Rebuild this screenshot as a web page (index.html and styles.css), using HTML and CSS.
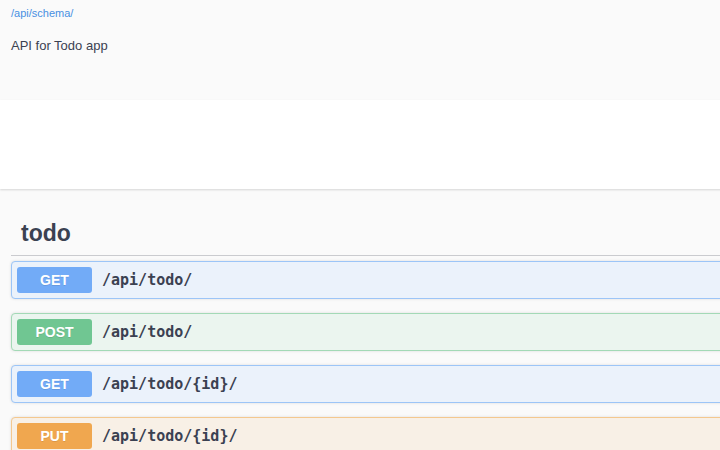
FILE: index.html
```html
<!DOCTYPE html>
<html>
<head>
    <link rel="stylesheet" href="styles.css">
</head>
<body>
    <div class="info">
        <a class="schema-link" href="#">/api/schema/</a>
        <p class="description">API for Todo app</p>
    </div>
    <div class="schemes"></div>
    <div class="wrapper">
        <h3 class="tag">todo</h3>
        <div class="opblock get">
            <span class="method">GET</span>
            <span class="path">/api/todo/</span>
        </div>
        <div class="opblock post">
            <span class="method">POST</span>
            <span class="path">/api/todo/</span>
        </div>
        <div class="opblock get">
            <span class="method">GET</span>
            <span class="path">/api/todo/{id}/</span>
        </div>
        <div class="opblock put">
            <span class="method">PUT</span>
            <span class="path">/api/todo/{id}/</span>
        </div>
    </div>
</body>
</html>
```

FILE: styles.css
```css
:root {
    --text-color: #3b4151;
    --get-color: #72abf7;
    --post-color: #70c692;
    --put-color: #f0a74f;
}
html, body {
    overflow: hidden;
}
body {
    margin: 0;
    width: 760px;
    background: #fafafa;
    font-family: "Liberation Sans", Arial, sans-serif;
    color: var(--text-color);
}
.info {
    height: 100px;
    box-sizing: border-box;
    padding: 3px 11px 0;
    background: #fafafa;
}
.schema-link {
    font-size: 11px;
    color: #4990e2;
    text-decoration: none;
}
.description {
    margin: 17px 0 0;
    font-size: 13px;
}
.schemes {
    height: 89px;
    background: #fff;
    box-shadow: 0 1px 2px 0 rgba(0,0,0,0.15);
}
.wrapper {
    padding: 0 0 0 11px;
}
.tag {
    margin: 0 0 5px;
    padding: 29px 20px 7px 10px;
    font-size: 23px;
    line-height: 30px;
    font-weight: 700;
    border-bottom: 1px solid rgba(59,65,81,0.25);
}
.opblock {
    display: flex;
    align-items: center;
    padding: 5px;
    margin-bottom: 14px;
    border: 1px solid;
    border-radius: 4px;
    box-shadow: 0 0 3px rgba(0,0,0,0.12);
}
.method {
    width: 75px;
    height: 26px;
    line-height: 26px;
    text-align: center;
    border-radius: 3px;
    color: #fff;
    font-size: 14px;
    font-weight: 700;
    text-shadow: 0 1px 0 rgba(0,0,0,0.1);
}
.path {
    padding: 0 10px;
    font-family: "DejaVu Sans Mono", monospace;
    font-size: 15px;
    font-weight: 700;
}
.get {
    background: #ebf2fb;
    border-color: #9cc5f7;
}
.get .method {
    background: var(--get-color);
}
.post {
    background: #ebf5ef;
    border-color: #a3d9b6;
}
.post .method {
    background: var(--post-color);
}
.put {
    background: #f8f0e6;
    border-color: #f4c88f;
}
.put .method {
    background: var(--put-color);
}
```
